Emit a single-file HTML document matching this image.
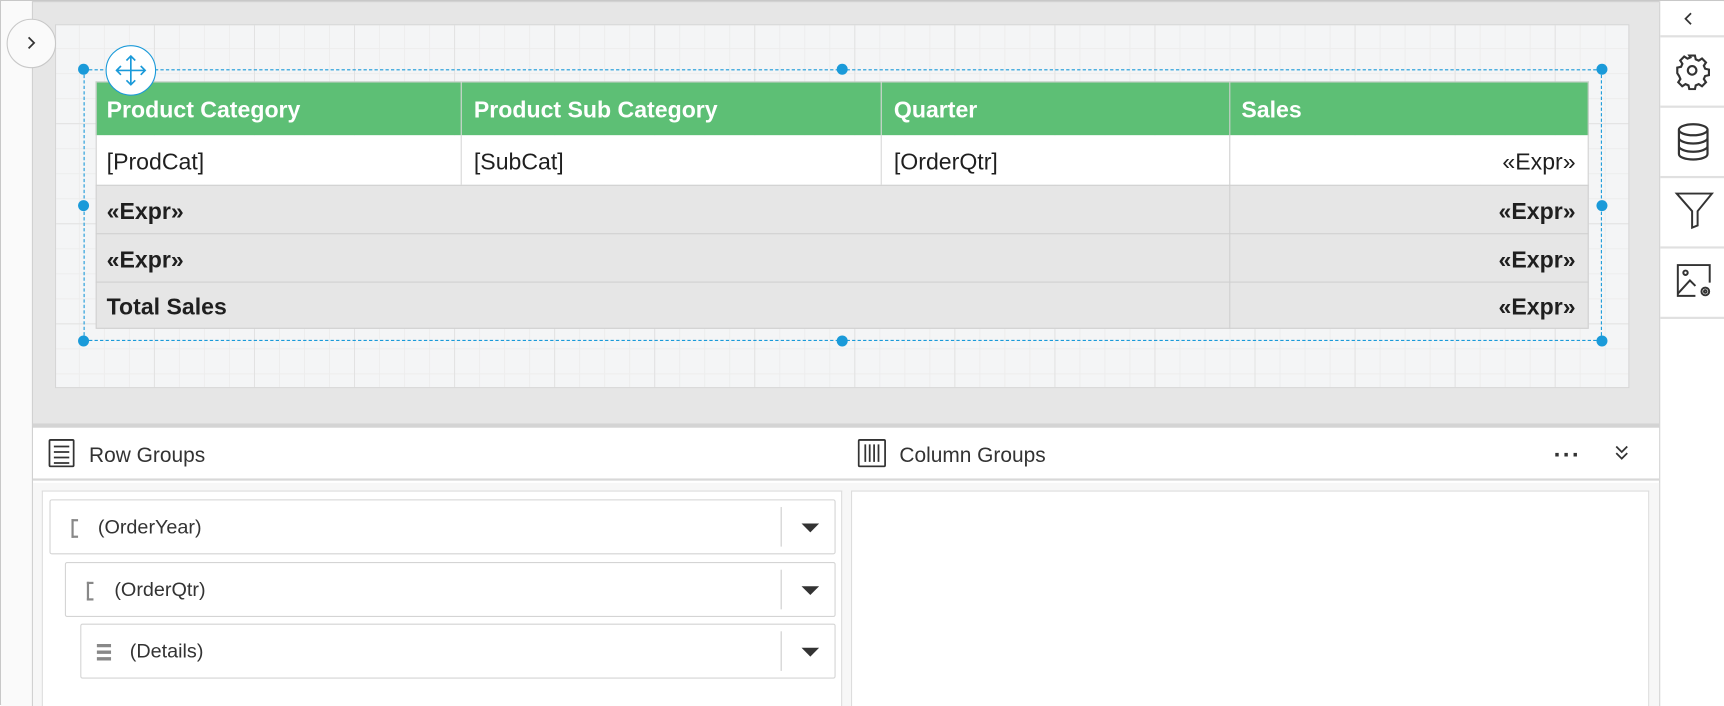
<!DOCTYPE html>
<html><head><meta charset="utf-8"><style>
*{box-sizing:border-box;margin:0;padding:0}
html,body{width:1724px;height:705px;overflow:hidden;background:#fff;font-family:"Liberation Sans",sans-serif}
#w{position:absolute;left:0;top:0;width:1568px;height:641px;transform:scale(1.09949,1.09984);transform-origin:0 0;border:1px solid #c8c8c8;background:#fff}
.abs{position:absolute}
.grid{background-color:#f4f5f6;background-image:linear-gradient(#e2e2e2 1px,transparent 1px),linear-gradient(90deg,#e2e2e2 1px,transparent 1px),linear-gradient(#ededed 1px,transparent 1px),linear-gradient(90deg,#ededed 1px,transparent 1px);background-size:91px 91px,91px 91px,22.75px 22.75px,22.75px 22.75px;background-position:-2px -2px}
.cell{position:absolute;font-size:21px;color:#1f1f1f;line-height:1}
.hd{color:#fff;font-weight:bold}
.b{font-weight:bold}
.h{position:absolute;width:10px;height:10px;border-radius:50%;background:#1a9ad9;margin:-5px 0 0 -5px}
.grp{position:absolute;border:1px solid #d4d4d4;border-radius:2px;background:#fff;height:50px;font-size:18px;color:#333}
.grp .t{position:absolute;top:14px}
.grp .dv{position:absolute;right:48px;top:6px;bottom:6px;width:1px;background:#ccc}
.grp .ar{position:absolute;right:14px;top:21px;width:0;height:0;border-left:8px solid transparent;border-right:8px solid transparent;border-top:8px solid #333}
.sep{position:absolute;left:0;right:0;height:2px;background:#e0e0e0}
.brk{position:absolute;top:17px;width:6px;height:17px;border:2px solid #888;border-right:none}
</style></head><body><div id="w">
<div class="abs" style="left:0;top:0;width:29px;height:641px;background:#fafafa;border-right:1px solid #d0d0d0"></div>
<div class="abs" style="left:29px;top:0;width:1479px;height:386px;background:#e6e6e6;border-top:1px solid #d0d0d0"></div>
<div class="abs grid" style="left:49px;top:21px;width:1432px;height:331px;border:1px solid #d6d6d6"></div>
<div class="abs" style="left:5px;top:16px;width:45px;height:45px;border-radius:50%;background:#fafafa;border:1px solid #c8c8c8"></div>
<svg class="abs" style="left:19px;top:30px" width="16" height="16"><path d="M6 3 L11 8 L6 13" fill="none" stroke="#333" stroke-width="1.6"/></svg>
<div class="abs" style="left:86px;top:73px;width:1358px;height:49px;background:#5dbf75"></div>
<div class="abs" style="left:86px;top:122px;width:1358px;height:45px;background:#fff"></div>
<div class="abs" style="left:86px;top:167px;width:1358px;height:131px;background:#e6e6e6"></div>
<div class="abs" style="left:86px;top:167px;width:1358px;height:1px;background:#d0d0d0"></div>
<div class="abs" style="left:86px;top:211px;width:1358px;height:1px;background:#d0d0d0"></div>
<div class="abs" style="left:86px;top:255px;width:1358px;height:1px;background:#d0d0d0"></div>
<div class="abs" style="left:86px;top:73px;width:1358px;height:225px;border:1px solid #d0d0d0"></div>
<div class="abs" style="left:418px;top:73px;width:1px;height:94px;background:#d8d8d8"></div>
<div class="abs" style="left:800px;top:73px;width:1px;height:94px;background:#d8d8d8"></div>
<div class="abs" style="left:1117px;top:73px;width:1px;height:225px;background:#d0d0d0"></div>
<div class="cell hd" style="left:96px;top:89px">Product Category</div>
<div class="cell hd" style="left:430px;top:89px">Product Sub Category</div>
<div class="cell hd" style="left:812px;top:89px">Quarter</div>
<div class="cell hd" style="left:1128px;top:89px">Sales</div>
<div class="cell" style="left:96px;top:136px">[ProdCat]</div>
<div class="cell" style="left:430px;top:136px">[SubCat]</div>
<div class="cell" style="left:812px;top:136px">[OrderQtr]</div>
<div class="cell" style="right:134px;top:136px">«Expr»</div>
<div class="cell b" style="left:96px;top:181px">«Expr»</div>
<div class="cell b" style="right:134px;top:181px">«Expr»</div>
<div class="cell b" style="left:96px;top:225px">«Expr»</div>
<div class="cell b" style="right:134px;top:225px">«Expr»</div>
<div class="cell b" style="left:96px;top:268px">Total Sales</div>
<div class="cell b" style="right:134px;top:268px">«Expr»</div>
<div class="abs" style="left:75px;top:62px;width:1381px;height:247px;border:1.5px dashed #1a9ad9"></div>
<div class="h" style="left:75px;top:62px"></div><div class="h" style="left:765px;top:62px"></div><div class="h" style="left:1456px;top:62px"></div>
<div class="h" style="left:75px;top:186px"></div><div class="h" style="left:1456px;top:186px"></div>
<div class="h" style="left:75px;top:309px"></div><div class="h" style="left:765px;top:309px"></div><div class="h" style="left:1456px;top:309px"></div>
<div class="abs" style="left:95px;top:40px;width:46px;height:46px;border-radius:50%;background:#fff;border:1.5px solid #1a9ad9"></div>
<svg class="abs" style="left:100px;top:45px" width="36" height="36" viewBox="0 0 36 36" fill="none" stroke="#1a9ad9" stroke-width="1.5"><path d="M18 5V31M5 18H31M14 9L18 5L22 9M14 27L18 31L22 27M9 14L5 18L9 22M27 14L31 18L27 22"/></svg>
<div class="abs" style="left:1508px;top:0;width:60px;height:641px;background:#fff;border-left:1px solid #d0d0d0">
<div class="sep" style="top:31px"></div><div class="sep" style="top:95px"></div><div class="sep" style="top:159px"></div><div class="sep" style="top:223px"></div><div class="sep" style="top:287px"></div>
<svg class="abs" style="left:19px;top:8px" width="14" height="16"><path d="M9 3L4 8L9 13" fill="none" stroke="#333" stroke-width="1.6"/></svg>
<svg class="abs" style="left:11px;top:45px" width="36" height="36" viewBox="0 0 24 24" fill="none" stroke="#333" stroke-width="1.3"><circle cx="12" cy="12" r="2.6"/><path d="M10.3 3h3.4l.5 2.3 1.8.8 2-1.3 2.4 2.4-1.3 2 .8 1.8 2.3.5v3.4l-2.3.5-.8 1.8 1.3 2-2.4 2.4-2-1.3-1.8.8-.5 2.3h-3.4l-.5-2.3-1.8-.8-2 1.3-2.4-2.4 1.3-2-.8-1.8L3 13.7v-3.4l2.3-.5.8-1.8-1.3-2 2.4-2.4 2 1.3 1.8-.8z"/></svg>
<svg class="abs" style="left:14px;top:110px" width="32" height="36" viewBox="0 0 32 36" fill="none" stroke="#333" stroke-width="2"><ellipse cx="16" cy="7" rx="13" ry="5"/><path d="M3 7V29C3 32 9 34 16 34S29 32 29 29V7M3 14.5C3 17 9 19.5 16 19.5S29 17 29 14.5M3 22C3 24.5 9 27 16 27S29 24.5 29 22"/></svg>
<svg class="abs" style="left:13px;top:172px" width="36" height="36" viewBox="0 0 36 36" fill="none" stroke="#333" stroke-width="1.8"><path d="M2 3H34L21 19V32L16 34V19Z"/></svg>
<svg class="abs" style="left:13px;top:236px" width="36" height="36" viewBox="0 0 36 36" fill="none" stroke="#333" stroke-width="1.8"><path d="M19 32H3V4H32V20"/><circle cx="10" cy="11" r="2"/><path d="M3 30L14 18L19 23"/><circle cx="28" cy="28" r="3.5"/><circle cx="28" cy="28" r="1.2"/></svg>
</div>
<div class="abs" style="left:29px;top:384px;width:1479px;height:4px;background:#d4d4d4"></div>
<div class="abs" style="left:29px;top:388px;width:1479px;height:48px;background:#fff;border-bottom:2px solid #d8d8d8"></div>
<svg class="abs" style="left:43px;top:398px" width="24" height="26" viewBox="0 0 24 26" fill="none" stroke="#333" stroke-width="1.6"><rect x="1" y="1" width="22" height="24" rx="1"/><path d="M5 7H19M5 12H19M5 17H19M5 22H19"/></svg>
<div class="abs" style="left:80px;top:403px;font-size:19px;color:#333">Row Groups</div>
<svg class="abs" style="left:779px;top:398px" width="26" height="26" viewBox="0 0 26 26" fill="none" stroke="#333" stroke-width="1.6"><rect x="1" y="1" width="24" height="24" rx="1"/><path d="M7 5V21M11 5V21M15 5V21M19 5V21"/></svg>
<div class="abs" style="left:817px;top:403px;font-size:19px;color:#333">Column Groups</div>
<div class="abs" style="left:1412px;top:400px;font-size:22px;color:#333;letter-spacing:1px;font-weight:bold">···</div>
<svg class="abs" style="left:1466px;top:402px" width="16" height="18"><path d="M3 3L8 8L13 3M3 9L8 14L13 9" fill="none" stroke="#333" stroke-width="1.6"/></svg>
<div class="abs" style="left:29px;top:438px;width:1479px;height:203px;background:#f7f7f7"></div>
<div class="abs" style="left:37px;top:445px;width:728px;height:196px;background:#fff;border:1px solid #ddd;border-bottom:none"></div>
<div class="abs" style="left:773px;top:445px;width:726px;height:196px;background:#fff;border:1px solid #ddd;border-bottom:none"></div>
<div class="grp" style="left:44px;top:453px;width:715px"><div class="brk" style="left:19px"></div><span class="t" style="left:43px">(OrderYear)</span><div class="dv"></div><div class="ar"></div></div>
<div class="grp" style="left:58px;top:510px;width:701px"><div class="brk" style="left:19px"></div><span class="t" style="left:44px">(OrderQtr)</span><div class="dv"></div><div class="ar"></div></div>
<div class="grp" style="left:72px;top:566px;width:687px"><svg class="abs" style="left:14px;top:17px" width="14" height="16"><path d="M0 2H13M0 8H13M0 14H13" stroke="#888" stroke-width="3"/></svg><span class="t" style="left:44px">(Details)</span><div class="dv"></div><div class="ar"></div></div>
</div></body></html>
